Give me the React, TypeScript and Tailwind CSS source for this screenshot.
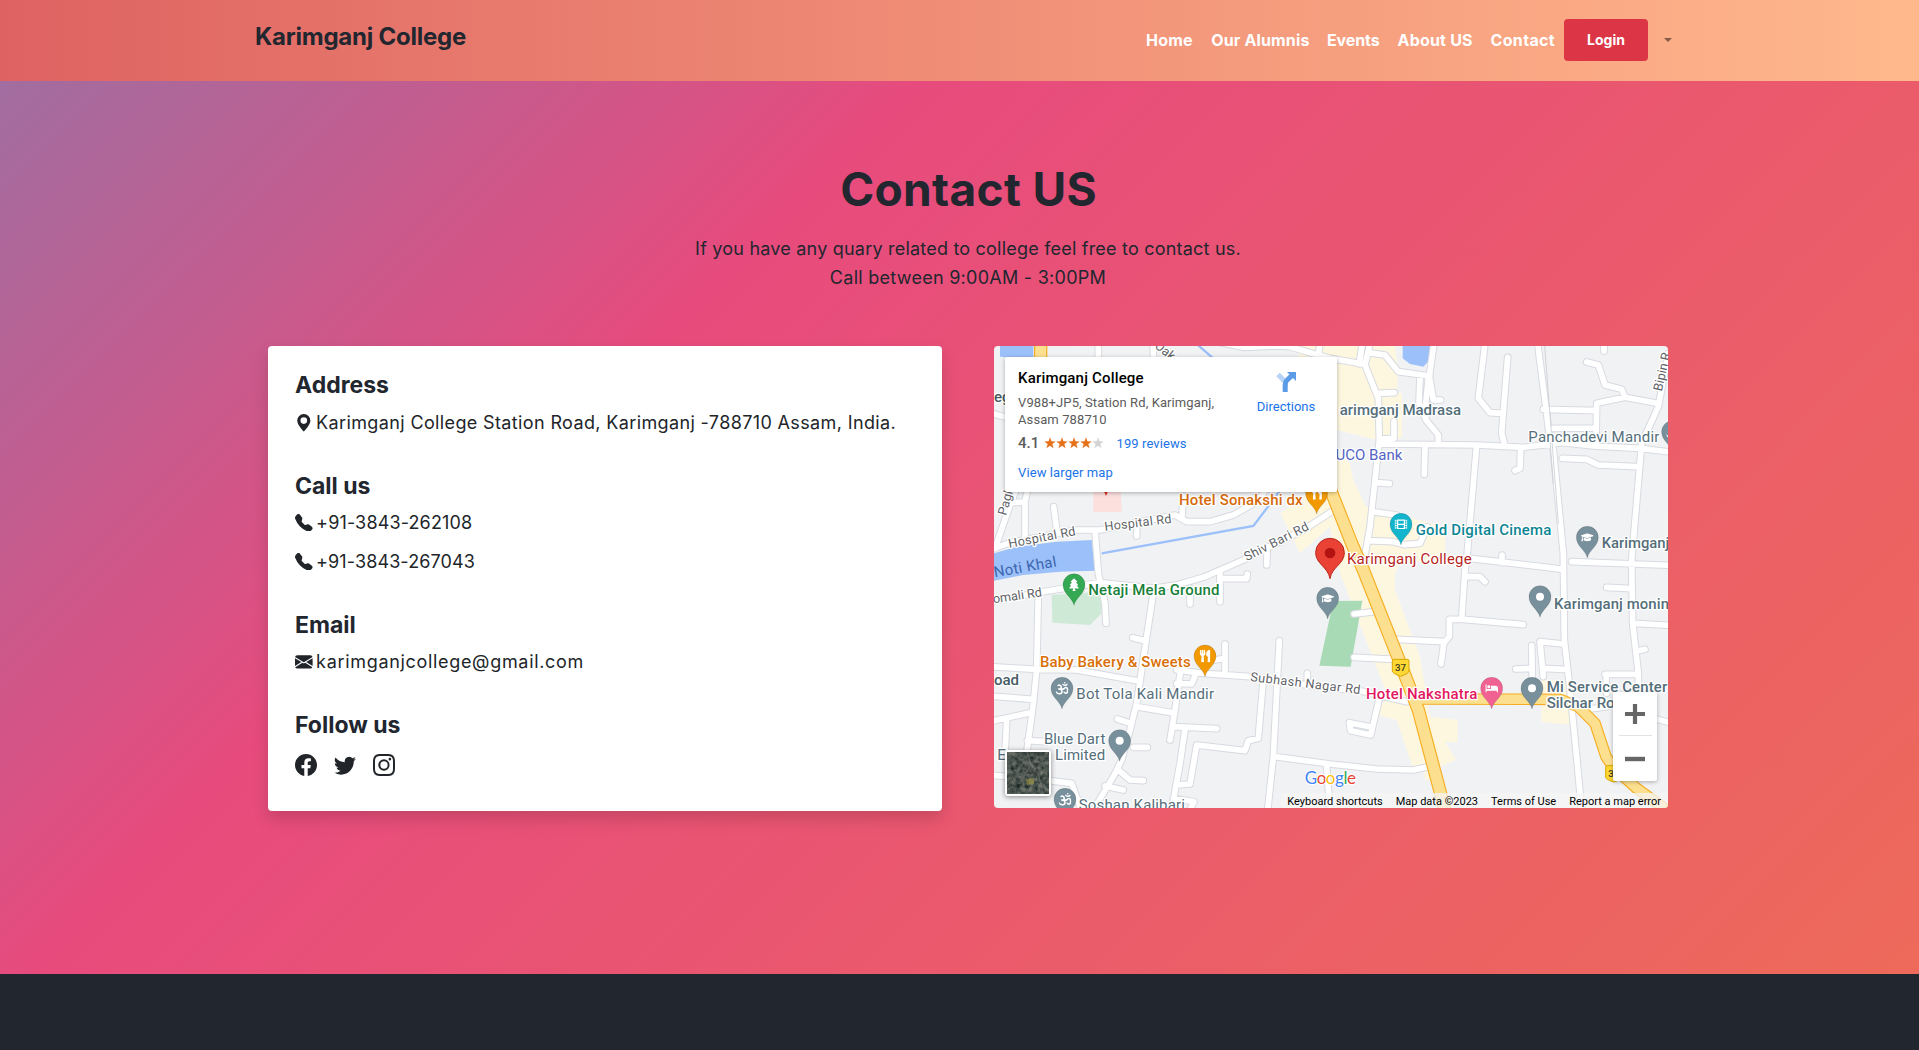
import type { ReactNode } from 'react';
import { BsEnvelopeFill, BsFacebook, BsGeoAltFill, BsInstagram, BsTelephoneFill, BsTwitter } from 'react-icons/bs';
import { FaBed, FaFilm, FaGraduationCap, FaOm, FaTree, FaUtensils } from 'react-icons/fa';
import type { IconType } from 'react-icons';

/* Streets of the map, three units per pixel. */
const roads = [
  'M12 222L60 235', 'M115 440L105 485L105 590', 'M78 450L62 490L15 625', 'M62 488L105 486',
  'M0 630L60 608L260 570L330 570L555 525L590 545L660 545L730 525L800 485L835 440',
  'M191 500L201 575', 'M440 588L440 555', 'M580 468L576 530',
  'M315 570L325 700L345 790L348 850',
  'M1040 505L940 570L760 660L640 712L560 735L490 745L330 728L160 755L0 785',
  'M830 675L832 620', 'M690 690L690 785', 'M690 716L770 716L772 702', 'M600 745L600 792',
  'M325 10L325 60', 'M490 10L490 60', 'M680 5L760 22L860 18L900 20L960 38L1020 55L1120 72', 'M990 10L985 45',
  'M1117 10L1108 72', 'M1140 10L1125 75L1165 175L1168 300L1155 420L1140 560L1125 645',
  'M1135 38L1185 45L1225 95L1320 108', 'M1332 10L1318 108L1330 180L1352 180', 'M1290 108L1287 190L1308 240L1345 285L1345 310', 'M1316 108L1306 200L1308 240',
  'M1165 160L1213 158', 'M1212 245L1212 295L1170 297',
  'M1170 312L1460 315L1600 322L1720 308L1810 318L1950 325L2040 336',
  'M1485 10L1465 175L1500 218L1535 220', 'M1553 52L1535 280L1545 318',
  'M1643 10L1680 300L1690 330L1720 640L1723 900L1740 1050L1755 1200L1775 1410',
  'M1660 208L1820 212', 'M1690 265L1818 264', 'M1818 312L1820 190L1905 172L2000 190', 'M1905 172L1895 148L1845 135L1825 75L1790 66', 'M1842 10L1842 34',
  'M2035 40L2005 200L1955 310L1925 660L1928 850L1945 1000L1945 1060',
  'M1717 355L1790 358L1825 375L1940 380', 'M1305 320L1303 403', 'M1592 325L1590 385L1575 392', 'M1158 428L1198 431',
  'M1145 515L1220 525', 'M1137 602L1210 605L1245 614L1290 610L1312 560',
  'M1460 315L1430 660L1425 690L1415 838', 'M1440 655L1720 688', 'M1536 645L1536 668', 'M1745 665L2040 676', 'M1425 710L1470 710L1485 725',
  'M1092 822L1155 815', 'M1092 952L1215 958', 'M1220 898L1365 905L1378 890L1378 838L1420 838L1600 854', 'M1362 905L1353 972',
  'M1850 742L1925 746', 'M1932 850L2040 856', 'M1965 928L1938 934', 'M1720 912L1650 905L1660 1010', 'M1660 985L1720 988', 'M1625 917L1627 1020', 'M1577 987L1625 985',
  'M1845 1003L1945 1003', 'M1848 1003L1850 1060', 'M1780 1110L1850 1100', 'M1990 1135L2040 1148',
  'M1168 1075L1142 1185L1082 1172L1078 1148L1140 1160',
  'M855 1250L1020 1272L1160 1287L1270 1290L1315 1280', 'M1010 1280L1020 1410',
  'M0 980L140 988L260 990L440 1022', 'M560 990L640 1000L780 1010L1020 1045L1110 1052L1250 1085',
  'M145 760L140 990L130 1090L110 1240', 'M0 1068L128 1078', 'M0 1145L120 1118', 'M50 1140L45 1240', 'M112 1202L170 1205',
  'M492 745L470 890L440 1090L420 1170L395 1260L370 1310L310 1410', 'M428 893L468 903', 'M382 1137L422 1150', 'M430 1222L472 1222', 'M385 1290L420 1320L460 1322', 'M345 1338L400 1350',
  'M440 1100L545 1118', 'M572 990L555 1110L540 1200', 'M560 1030L605 1032L618 1000', 'M705 912L705 1000', 'M705 955L675 960',
  'M550 1160L680 1166', 'M585 1168L570 1270L545 1410', 'M820 1015L805 1195L775 1202L765 1232L620 1215L600 1332L560 1335',
  'M868 902L850 1250L833 1410', 'M952 1000L952 1025', 'M0 1305L180 1322L245 1330L270 1400', 'M550 1375L612 1385L600 1410',
];

const highway = 'M1010 420L1085 610L1120 690L1235 980L1285 1110L1365 1410';
const branch = 'M1280 1077L1710 1078L1765 1100L1815 1150L1848 1250L1870 1282L1940 1345L2030 1410';

function Pin({ x, y, fill, icon: Icon }: { x: number; y: number; fill: string; icon?: IconType }) {
  return (
    <g transform={`translate(${x} ${y})`}>
      <path d="M0 62C-5 38-33 28-33 0A33 33 0 1 1 33 0C33 28 5 38 0 62Z" fill={fill} stroke="#00000030" strokeWidth="2" />
      {Icon ? <Icon x={-19} y={-19} width={38} height={38} size={38} color="#fff" /> : <circle r="12" fill="#fff" />}
    </g>
  );
}

type LabelProps = { x: number; y: number; w?: number; fill: string; children: string; rotate?: number; size?: number; bold?: boolean; end?: boolean };
function Label({ x, y, w, fill, children, rotate = 0, size = 45, bold = false, end = false }: LabelProps) {
  return (
    <text
      transform={`translate(${x} ${y}) rotate(${rotate})`}
      fontSize={size}
      fontWeight={bold ? 500 : 400}
      textLength={w}
      textAnchor={end ? 'end' : 'start'}
      fill={fill}
      stroke="#fff"
      strokeWidth="8"
      strokeLinejoin="round"
      paintOrder="stroke"
    >
      {children}
    </text>
  );
}

const slate = '#546e7a';
const dark = '#455a64';
const road = '#5f6368';

function MapDrawing() {
  return (
    <svg viewBox="12 18 2022 1386" width="674" height="462" className="block font-[Roboto,sans-serif]">
      <rect x="0" y="0" width="2050" height="1420" fill="#f1f2f4" />
      <g fill="#fef7e0">
        <path d="M850 62L925 50L930 18L1215 18L1225 90L1220 160L1236 160L1236 290L1200 310L1040 270L1020 60Z" />
        <path d="M1040 330L1080 370L1090 420L1128 500L1365 560L1365 660L1230 668L1215 700L1215 750L1290 950L1320 1130L1403 1140L1403 1206L1365 1206L1398 1260L1325 1290L1325 1320L1305 1320L1300 1275L1268 1280L1220 1140L1165 1125L1190 1060L1120 880L1050 700L1020 560L930 640L872 520L960 455Z" />
        <path d="M1655 1018L1760 1030L1740 1155L1654 1145Z" />
      </g>
      <path d="M185 765L330 755L335 820L300 855L187 848Z" fill="#ceead6" />
      <path d="M1030 783L1117 782L1082 980L988 977Z" fill="#a8dab5" />
      <path d="M310 440L392 440L395 516L310 516Z" fill="#fce0de" />
      <g fill="#9cc0f9">
        <path d="M12 640L80 620L200 605L305 600L315 692L210 695L100 705L12 722Z" />
        <path d="M30 10L130 10L130 60L30 50Z" />
        <path d="M1238 10L1321 10L1319 60L1300 80L1260 72L1238 55Z" />
      </g>
      <path d="M335 640L790 558L872 450M620 12L670 55" fill="none" stroke="#9cc0f9" strokeWidth="7" />
      <g fill="none" strokeLinecap="round" strokeLinejoin="round">
        <path d={roads.join('')} stroke="#d7dae0" strokeWidth="23" />
        <path d={roads.join('')} stroke="#fff" strokeWidth="17" />
        <path d="M1664 18L1678 200L1705 550M1680 300L1690 430" stroke="#c9ccd1" strokeWidth="2.5" />
        <path d={branch} stroke="#f5ae24" strokeWidth="35" />
        <path d={`${highway}M152 0L152 60`} stroke="#f5ae24" strokeWidth="40" />
        <path d={branch} stroke="#fde08f" strokeWidth="28" />
        <path d={`${highway}M152 0L152 60`} stroke="#fde08f" strokeWidth="33" />
      </g>

      <g stroke="#d9a800" strokeWidth="3" fill="#fdd835">
        <path d="M1212 958H1252Q1257 958 1257 963V993Q1257 1000 1232 1009Q1207 1000 1207 993V963Q1207 958 1212 958Z" />
        <path d="M1852 1277H1890Q1895 1277 1895 1282V1312Q1895 1318 1871 1326Q1847 1318 1847 1312V1282Q1847 1277 1852 1277Z" />
      </g>
      <text x="1215" y="993" fontSize="29" fontWeight="500" fill="#3c3a20">37</text>
      <text x="1855" y="1311" fontSize="29" fontWeight="500" fill="#3c3a20">37</text>

      <Label x={345} y={573} w={202} fill={road} rotate={-7} size={38}>Hospital Rd</Label>
      <Label x={58} y={624} w={204} fill={road} rotate={-11} size={38}>Hospital Rd</Label>
      <Label x={770} y={664} w={212} fill={road} rotate={-27} size={38}>Shiv Bari Rd</Label>
      <Label x={48} y={528} fill={road} rotate={-74} size={38}>Pagl</Label>
      <Label x={492} y={22} fill={road} rotate={38} size={38}>Oak</Label>
      <Label x={2015} y={155} fill={road} rotate={-77} size={38}>Bipin R</Label>
      <Label x={157} y={769} fill={road} rotate={-8} size={38} end>omali Rd</Label>
      <Label x={780} y={1023} w={332} fill={road} rotate={6.8} size={38}>Subhash Nagar Rd</Label>
      <text transform="translate(14 712) rotate(-10)" fontSize="45" textLength="190" fill="#3b66b0">Noti Khal</text>

      <Label x={12} y={187} fill={dark} bold>eg</Label>
      <Label x={1413} y={225} fill={slate} bold end>arimganj Madrasa</Label>
      <Label x={1237} y={361} fill="#5363c4" end>UCO Bank</Label>
      <Label x={1615} y={305} w={393} fill={slate}>Panchadevi Mandir</Label>
      <Label x={567} y={495} w={371} fill="#d56a0b" bold>Hotel Sonakshi dx</Label>
      <Label x={1277} y={586} w={407} fill="#0b8594" bold>Gold Digital Cinema</Label>
      <Label x={1071} y={672} w={374} fill="#b81f1c">Karimganj College</Label>
      <Label x={1835} y={624} w={203} fill={slate} bold>Karimganj</Label>
      <Label x={295} y={766} w={393} fill="#188038" bold>Netaji Mela Ground</Label>
      <Label x={150} y={981} w={452} fill="#d96f07" bold>Baby Bakery &amp; Sweets</Label>
      <Label x={12} y={1034} fill={dark} bold>oad</Label>
      <Label x={259} y={1078} w={413} fill={slate}>Bot Tola Kali Mandir</Label>
      <Label x={162} y={1212} w={184} fill={slate}>Blue Dart</Label>
      <Label x={22} y={1260} fill={slate}>E</Label>
      <Label x={195} y={1260} w={151} fill={slate}>Limited</Label>
      <Label x={266} y={1410} w={319} fill={slate}>Soshan Kalibari</Label>
      <Label x={1692} y={806} w={345} fill={slate} bold>Karimganj monin</Label>
      <Label x={1128} y={1078} w={334} fill="#e3175f" bold>Hotel Nakshatra</Label>
      <Label x={1670} y={1057} w={362} fill={slate} bold>Mi Service Center</Label>
      <Label x={1670} y={1103} fill={slate} bold>Silchar Road</Label>

      <path d="M340 450H356L348 468Z" fill="#d93025" />
      <Pin x={980} y={460} fill="#f29900" icon={FaUtensils} />
      <Pin x={1233} y={553} fill="#12b5cb" icon={FaFilm} />
      <Pin x={1792} y={592} fill="#78909c" icon={FaGraduationCap} />
      <Pin x={2048} y={275} fill="#78909c" icon={FaOm} />
      <Pin x={252} y={734} fill="#34a853" icon={FaTree} />
      <Pin x={1013} y={775} fill="#78909c" icon={FaGraduationCap} />
      <Pin x={645} y={948} fill="#f29900" icon={FaUtensils} />
      <Pin x={216} y={1045} fill="#78909c" icon={FaOm} />
      <Pin x={389} y={1202} fill="#78909c" />
      <Pin x={225} y={1378} fill="#78909c" icon={FaOm} />
      <Pin x={1650} y={770} fill="#78909c" />
      <Pin x={1505} y={1045} fill="#f06292" icon={FaBed} />
      <Pin x={1626} y={1045} fill="#78909c" />
      <path d="M1020 716C1014 680 977 672 977 638A43 43 0 1 1 1063 638C1063 672 1026 680 1020 716Z" fill="#ea4335" stroke="#b9251b" strokeWidth="3" />
      <circle cx="1020" cy="639" r="16" fill="#b31412" />

      <text x="944" y="1333" fontSize="51" textLength="154" className="font-[Lato,sans-serif]" stroke="#fff" strokeWidth="6" paintOrder="stroke" strokeLinejoin="round">
        <tspan fill="#4285f4">G</tspan>
        <tspan fill="#ea4335">o</tspan>
        <tspan fill="#fbbc05">o</tspan>
        <tspan fill="#4285f4">g</tspan>
        <tspan fill="#34a853">l</tspan>
        <tspan fill="#ea4335">e</tspan>
      </text>
    </svg>
  );
}

function Star({ fill }: { fill: string }) {
  return (
    <svg viewBox="0 0 24 24" width="12" height="12">
      <path d="M12 0.5L14.9 8.6L23.5 8.9L16.7 14.2L19.1 22.5L12 17.6L4.9 22.5L7.3 14.2L0.5 8.9L9.1 8.6Z" fill={fill} />
    </svg>
  );
}

function PlaceCard() {
  return (
    <div className="absolute left-[11px] top-[11px] flex h-[135px] w-[332px] rounded-[2px] bg-white pl-[13px] text-[13px] shadow-[0_1px_4px_rgba(0,0,0,0.3)]">
      <div className="w-[226px] pt-[12px]">
        <div className="text-[15px] font-medium leading-[18px] tracking-[0.18px] text-black">Karimganj College</div>
        <div className="mt-[7px] leading-[17px] tracking-[0.1px] text-[#5b5b5b]">
          V988+JP5, Station Rd, Karimganj,
          <br />
          Assam 788710
        </div>
        <div className="mt-[6px] flex h-[18px] items-center">
          <span className="w-[25.5px] text-[15px] font-medium text-[#5b5b5b]">4.1</span>
          <span className="mb-px flex">
            <Star fill="#e7711b" />
            <Star fill="#e7711b" />
            <Star fill="#e7711b" />
            <Star fill="#e7711b" />
            <Star fill="#d3d3d3" />
          </span>
          <span className="ml-[13px] mt-[2px] tracking-[0.1px] text-[#1a73e8]">199 reviews</span>
        </div>
        <div className="mt-[12px] leading-[18px] tracking-[0.1px] text-[#1a73e8]">View larger map</div>
      </div>
      <div className="flex w-[84px] flex-col items-center pt-[15px]">
        <svg viewBox="0 0 20 20" width="20" height="20">
          <path d="M2 2.5L9.5 10V14" fill="none" stroke="#b7d3f6" strokeWidth="5" />
          <path d="M9.2 20V12.5Q9.2 10 11 8.3L15.8 3.6" fill="none" stroke="#5c9ce6" strokeWidth="5" />
          <path d="M11 0H20V9Z" fill="#5c9ce6" />
        </svg>
        <span className="mt-[5.5px] leading-[18px] text-[#1a73e8]">Directions</span>
      </div>
    </div>
  );
}

function CollegeMap() {
  return (
    <div className="relative h-[462px] w-[674px] shrink-0 overflow-hidden rounded font-[Roboto,sans-serif]">
      <MapDrawing />
      <div className="absolute bottom-0 right-0 flex h-[15px] items-center bg-[#f5f5f5]/75 pl-[6px] pr-[7px] pt-[2px] text-[11px] leading-none text-black">
        <span>Keyboard shortcuts</span>
        <span className="ml-[13px]">Map data ©2023</span>
        <span className="ml-[13px]">Terms of Use</span>
        <span className="ml-[13px]">Report a map error</span>
      </div>
      <PlaceCard />
      <div className="absolute left-[11px] top-[404px] h-[46px] w-[46px] overflow-hidden rounded-[3px] border-2 border-white bg-[#4a5953] shadow-[0_1px_5px_rgba(0,0,0,0.45)]">
        <svg viewBox="0 0 42 42" width="42" height="42">
          <defs>
            <filter id="terrain" x="0" y="0" width="100%" height="100%" colorInterpolationFilters="sRGB">
              <feTurbulence type="fractalNoise" baseFrequency="0.22" numOctaves="4" seed="8" />
              <feColorMatrix values="0.45 0.2 0 0 -0.03  0.4 0.2 0 0 0.03  0.36 0.2 0 0 0.03  0 0 0 0 1" />
            </filter>
          </defs>
          <rect width="42" height="42" filter="url(#terrain)" />
          <path d="M20 0L24 12L32 24L36 42M24 12L14 30" fill="none" stroke="#8a8280" strokeOpacity="0.45" strokeWidth="1.2" />
          <path d="M19 27L27 26L27 32L20 33Z" fill="#a39a45" fillOpacity="0.6" />
        </svg>
      </div>
      <div className="absolute left-[619px] top-[346px] flex h-[89px] w-[44px] flex-col items-center rounded-[2px] bg-white shadow-[0_1px_4px_rgba(0,0,0,0.3)]">
        <svg viewBox="0 0 20 20" width="20" height="20" className="mt-[12px]">
          <path d="M10 0V20M0 10H20" stroke="#666" strokeWidth="4.2" />
        </svg>
        <div className="mt-[11px] h-px w-[33px] bg-[#e2e2e2]" />
        <svg viewBox="0 0 20 20" width="20" height="20" className="mt-[13px]">
          <path d="M0 10H20" stroke="#666" strokeWidth="4.4" />
        </svg>
      </div>
    </div>
  );
}

function Row({ icon, children, className }: { icon: ReactNode; children: ReactNode; className: string }) {
  return (
    <div className={`flex h-7 items-center whitespace-nowrap text-[18px] leading-7 ${className}`}>
      <span className="mr-[3.5px] text-[17.6px]">{icon}</span>
      {children}
    </div>
  );
}

export default function App() {
  return (
    <div className="h-[1050px] w-[1919px] overflow-hidden bg-[#22262f] font-[Inter,sans-serif] text-[#212529]">
      <header className="flex h-[81px] bg-linear-to-r from-[#de6262] to-[#ffb88c] pl-[255px]">
        <div className="w-[891px] pt-[19px] text-[24px] font-bold leading-[35px] tracking-[-0.23px] text-[#22262f]">Karimganj College</div>
        <nav className="flex h-[80px] items-center text-[16px] font-bold text-white">
          <a className="w-[65.2px] tracking-[0.25px]">Home</a>
          <a className="w-[115.8px] tracking-[0.15px]">Our Alumnis</a>
          <a className="w-[70.5px] tracking-[-0.1px]">Events</a>
          <a className="w-[93px] tracking-[0.2px]">About US</a>
          <a className="w-[73.5px] tracking-[0.35px]">Contact</a>
          <button className="mb-px flex h-[42px] w-[84px] items-center justify-center rounded bg-[#dc3545] text-[14px] font-bold text-white">Login</button>
          <span className="ml-[16px] border-x-4 border-t-4 border-x-transparent border-t-[#865a49]" />
        </nav>
      </header>

      <main className="flex h-[893px] flex-col items-center bg-[linear-gradient(135deg,#a16da0_0%,#e74b7d_32.7%,#ee6a5a_100%)]">
        <h1 className="mt-[80px] pl-[18px] text-[46px] font-bold leading-[56px] tracking-[0.35px] text-[#22262f]">Contact US</h1>
        <p className="mt-[16.5px] pl-[17px] text-center text-[18px] leading-[29px] text-[#22262f]">
          <span className="tracking-[0.21px]">If you have any quary related to college feel free to contact us.</span>
          <br />
          <span className="tracking-[0.27px]">Call between 9:00AM - 3:00PM</span>
        </p>

        <div className="mt-[54.5px] flex w-[1400px] items-start gap-[52px] pl-[8.5px]">
          <section className="h-[465px] w-[674px] shrink-0 rounded bg-white pl-[27px] pt-[25px] shadow-[0_8px_16px_rgba(0,0,0,0.15)]">
            <h2 className="h-[29px] text-[23px] font-bold leading-[29px] text-[#22262f]">Address</h2>
            <Row icon={<BsGeoAltFill />} className="mt-[9px] tracking-[0.37px]">Karimganj College Station Road, Karimganj -788710 Assam, India.</Row>
            <h2 className="mt-[35px] h-[29px] text-[23px] font-bold leading-[29px] text-[#22262f]">Call us</h2>
            <Row icon={<BsTelephoneFill />} className="mt-[7.5px] tracking-[0.14px]">+91-3843-262108</Row>
            <Row icon={<BsTelephoneFill />} className="mt-[11px] tracking-[0.1px]">+91-3843-267043</Row>
            <h2 className="mt-[35.5px] h-[29px] text-[23px] font-bold leading-[29px] text-[#22262f]">Email</h2>
            <Row icon={<BsEnvelopeFill />} className="mt-[7.5px] tracking-[0.68px]">karimganjcollege@gmail.com</Row>
            <h2 className="mt-[35.5px] h-[29px] text-[23px] font-bold leading-[29px] text-[#22262f]">Follow us</h2>
            <div className="mt-[14px] flex gap-[17px] text-[22px]">
              <BsFacebook />
              <BsTwitter />
              <BsInstagram />
            </div>
          </section>
          <CollegeMap />
        </div>
      </main>
    </div>
  );
}
